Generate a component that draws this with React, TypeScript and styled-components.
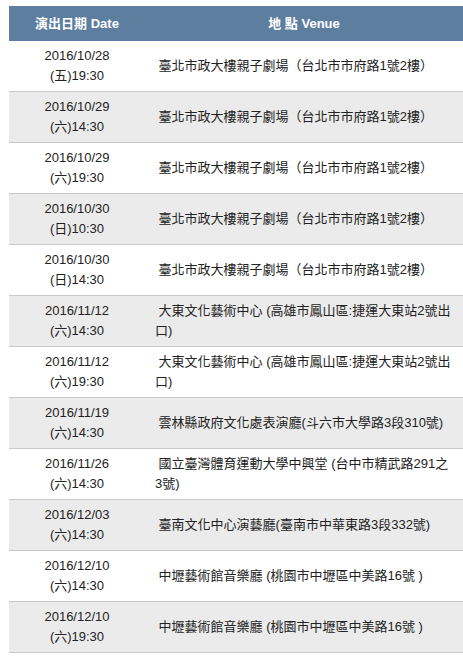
import React from "react";
import styled, { createGlobalStyle } from "styled-components";

const GlobalStyle = createGlobalStyle`
  html, body {
    margin: 0;
    padding: 0;
    background: #ffffff;
  }
  body {
    font-family: "Liberation Sans", Arial, "Noto Sans CJK TC", sans-serif;
    color: #222222;
  }
`;

const Page = styled.div`
  padding: 6px 0 0 9px;
`;

const Table = styled.table`
  width: 454px;
  border-collapse: collapse;
  table-layout: fixed;
  font-size: 13px;
  line-height: 20px;
`;

const HeadCell = styled.th<{ $w: number }>`
  width: ${(p) => p.$w}px;
  background: #5d7e9f;
  color: #ffffff;
  font-weight: bold;
  text-align: center;
  height: 35px;
  padding: 0;
`;

const Row = styled.tr<{ $alt: boolean }>`
  background: ${(p) => (p.$alt ? "#ebebeb" : "#ffffff")};
  border-bottom: 1px solid #c8c8c8;
`;

const DateCell = styled.td`
  text-align: center;
  vertical-align: middle;
  height: 50px;
  padding: 0;
`;

const VenueCell = styled.td`
  text-align: left;
  vertical-align: middle;
  padding: 0 10px 0 10px;
`;

const rows: [string, string, string][] = [
  ["2016/10/28", "(五)19:30", "臺北市政大樓親子劇場（台北市市府路1號2樓）"],
  ["2016/10/29", "(六)14:30", "臺北市政大樓親子劇場（台北市市府路1號2樓）"],
  ["2016/10/29", "(六)19:30", "臺北市政大樓親子劇場（台北市市府路1號2樓）"],
  ["2016/10/30", "(日)10:30", "臺北市政大樓親子劇場（台北市市府路1號2樓）"],
  ["2016/10/30", "(日)14:30", "臺北市政大樓親子劇場（台北市市府路1號2樓）"],
  ["2016/11/12", "(六)14:30", "大東文化藝術中心 (高雄市鳳山區:捷運大東站2號出口)"],
  ["2016/11/12", "(六)19:30", "大東文化藝術中心 (高雄市鳳山區:捷運大東站2號出口)"],
  ["2016/11/19", "(六)14:30", "雲林縣政府文化處表演廳(斗六市大學路3段310號)"],
  ["2016/11/26", "(六)14:30", "國立臺灣體育運動大學中興堂 (台中市精武路291之3號)"],
  ["2016/12/03", "(六)14:30", "臺南文化中心演藝廳(臺南市中華東路3段332號)"],
  ["2016/12/10", "(六)14:30", "中壢藝術館音樂廳 (桃園市中壢區中美路16號 )"],
  ["2016/12/10", "(六)19:30", "中壢藝術館音樂廳 (桃園市中壢區中美路16號 )"],
];

export default function App() {
  return (
    <>
      <GlobalStyle />
      <Page>
        <Table>
          <thead>
            <tr>
              <HeadCell $w={136}>演出日期 Date</HeadCell>
              <HeadCell $w={318}>地 點 Venue</HeadCell>
            </tr>
          </thead>
          <tbody>
            {rows.map(([d, t, v], i) => (
              <Row key={i} $alt={i % 2 === 1}>
                <DateCell>
                  {d}
                  <br />
                  {t}
                </DateCell>
                <VenueCell>{"\u00a0" + v}</VenueCell>
              </Row>
            ))}
          </tbody>
        </Table>
      </Page>
    </>
  );
}
